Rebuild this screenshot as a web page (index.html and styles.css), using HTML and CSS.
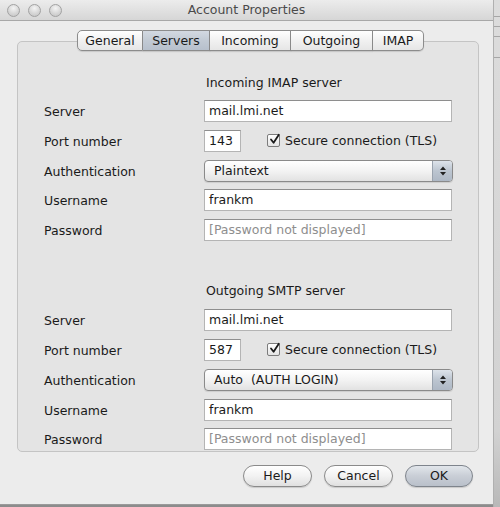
FILE: index.html
```html
<!DOCTYPE html>
<html>
<head>
<meta charset="utf-8">
<link rel="stylesheet" href="styles.css">
</head>
<body>
<div class="screen">
  <div class="window">
    <div class="titlebar">
      <div class="lights"><span class="light"></span><span class="light"></span><span class="light"></span></div>
      <div class="title">Account Properties</div>
    </div>
    <div class="tabs">
      <div class="tab t-general">General</div>
      <div class="tab t-servers selected">Servers</div>
      <div class="tab t-incoming">Incoming</div>
      <div class="tab t-outgoing">Outgoing</div>
      <div class="tab t-imap">IMAP</div>
    </div>
    <div class="tabbox">
      <div class="section first">
        <div class="heading">Incoming IMAP server</div>
        <div class="grid">
          <div class="label">Server</div>
          <div class="field"><div class="input wide">mail.lmi.net</div></div>
          <div class="label">Port number</div>
          <div class="field port-row"><div class="input port">143</div><div class="check"><span class="box"><svg width="13" height="13" viewBox="0 0 13 13"><path d="M3 6.5 L5.6 9.8 L10.8 1.8" fill="none" stroke="#1a1a1a" stroke-width="1.8" stroke-linecap="round" stroke-linejoin="round"/></svg></span><span class="check-label">Secure connection (TLS)</span></div></div>
          <div class="label">Authentication</div>
          <div class="field"><div class="popup"><span class="popup-text">Plaintext</span><span class="stepper"><svg width="8" height="12" viewBox="0 0 8 12"><path d="M4 1.5 L7 5 L1 5 Z M4 10.5 L7 7 L1 7 Z" fill="#222"/></svg></span></div></div>
          <div class="label">Username</div>
          <div class="field"><div class="input wide">frankm</div></div>
          <div class="label">Password</div>
          <div class="field"><div class="input wide placeholder">[Password not displayed]</div></div>
        </div>
      </div>
      <div class="section second">
        <div class="heading">Outgoing SMTP server</div>
        <div class="grid">
          <div class="label">Server</div>
          <div class="field"><div class="input wide">mail.lmi.net</div></div>
          <div class="label">Port number</div>
          <div class="field port-row"><div class="input port">587</div><div class="check"><span class="box"><svg width="13" height="13" viewBox="0 0 13 13"><path d="M3 6.5 L5.6 9.8 L10.8 1.8" fill="none" stroke="#1a1a1a" stroke-width="1.8" stroke-linecap="round" stroke-linejoin="round"/></svg></span><span class="check-label">Secure connection (TLS)</span></div></div>
          <div class="label">Authentication</div>
          <div class="field"><div class="popup"><span class="popup-text">Auto&nbsp; (AUTH LOGIN)</span><span class="stepper"><svg width="8" height="12" viewBox="0 0 8 12"><path d="M4 1.5 L7 5 L1 5 Z M4 10.5 L7 7 L1 7 Z" fill="#222"/></svg></span></div></div>
          <div class="label">Username</div>
          <div class="field"><div class="input wide">frankm</div></div>
          <div class="label">Password</div>
          <div class="field"><div class="input wide placeholder">[Password not displayed]</div></div>
        </div>
      </div>
    </div>
    <div class="buttons">
      <div class="btn">Help</div>
      <div class="btn">Cancel</div>
      <div class="btn default">OK</div>
    </div>
  </div>
  <div class="behind">
    <div class="bl l1"></div>
    <div class="bl l2"></div>
    <div class="bl l3"></div>
    <div class="bl l4"></div>
  </div>
</div>
</body>
</html>
```

FILE: styles.css
```css
* { box-sizing: border-box; }
html, body { margin: 0; padding: 0; }
body {
  width: 500px;
  height: 507px;
  overflow: hidden;
  background: #8c8c8c;
  font-family: "DejaVu Sans", "Verdana", sans-serif;
  font-size: 12.5px;
  color: #1a1a1a;
}
.screen {
  display: flex;
  width: 500px;
  height: 507px;
}
.window {
  width: 493px;
  height: 505px;
  background: #ececec;
  border-bottom: 1px solid #9a9a9a;
  flex: none;
}
.behind {
  flex: 1;
  height: 507px;
  background: linear-gradient(#dcdcdc, #d2d2d2 85%, #b8b8b8);
  border-left: 1px solid #b0b0b0;
  padding-top: 16px;
}
.bl { height: 1px; background: #a6a6a6; }
.l1 { margin-top: 0; }
.l2 { margin-top: 9px; }
.l3 { margin-top: 9px; }
.l4 { margin-top: 20px; }

.titlebar {
  height: 21px;
  background: linear-gradient(#ececec, #d6d6d6);
  border-bottom: 1px solid #a8a8a8;
  display: flex;
  align-items: center;
  position: relative;
}
.lights {
  display: flex;
  gap: 8px;
  padding-left: 7px;
}
.light {
  width: 13px;
  height: 13px;
  border-radius: 50%;
  background: radial-gradient(circle at 50% 30%, #f4f4f4, #d4d4d4 60%, #c2c2c2);
  border: 1px solid #a2a2a2;
}
.title {
  position: absolute;
  left: 0;
  right: 0;
  top: 2px;
  text-align: center;
  color: #4a4a4a;
  font-size: 12.5px;
  line-height: 16px;
}

.tabs {
  display: flex;
  margin: 9px 0 0 77px;
  height: 21px;
  position: relative;
  z-index: 1;
}
.tab {
  height: 21px;
  line-height: 19px;
  text-align: center;
  border: 1px solid #8c8c8c;
  border-left: none;
  background: linear-gradient(#ffffff, #f1f1f1 50%, #e6e6e6);
  color: #1a1a1a;
  box-shadow: 0 1px 1px rgba(0,0,0,0.12);
}
.t-general { width: 66px; border-left: 1px solid #8c8c8c; border-radius: 5px 0 0 5px; }
.t-servers { width: 67px; }
.t-incoming { width: 81px; }
.t-outgoing { width: 82px; }
.t-imap { width: 51px; border-radius: 0 5px 5px 0; }
.tab.selected {
  background: linear-gradient(#d3d9e1, #c2cad4 50%, #b7c0cc);
}

.tabbox {
  margin: -10px 0 0 17px;
  width: 462px;
  height: 411px;
  background: #e4e4e4;
  border: 1px solid #c4c4c4;
  border-radius: 5px;
  padding: 33px 0 0 26px;
  overflow: hidden;
}
.heading {
  margin-left: 162px;
  line-height: 16px;
  height: 16px;
}
.first .heading { margin-bottom: 9px; }
.second { margin-top: 42px; }
.second .heading { margin-bottom: 10px; }
.grid {
  display: grid;
  grid-template-columns: 160px 249px;
  grid-auto-rows: 22px;
  row-gap: 7.8px;
}
.label {
  line-height: 23px;
}
.field { display: flex; align-items: center; }
.input {
  height: 22px;
  background: #ffffff;
  border: 1px solid #b4b4b4;
  border-top-color: #8e8e8e;
  line-height: 20px;
  padding-left: 4px;
  white-space: nowrap;
  overflow: hidden;
}
.input.wide { width: 248px; }
.input.port { width: 37px; }
.placeholder { color: #8e8e8e; }
.port-row { gap: 26px; }
.check { display: flex; align-items: center; gap: 5px; }
.box {
  width: 13px;
  height: 13px;
  border: 1px solid #7c7c7c;
  border-radius: 2px;
  background: linear-gradient(#ffffff, #e4e4e4);
  display: flex;
  align-items: center;
  justify-content: center;
  overflow: visible;
}
.box svg { margin-top: -2px; margin-left: 1px; flex: none; }
.popup {
  width: 249px;
  height: 22px;
  border: 1px solid #8a8a8a;
  border-radius: 4px;
  background: linear-gradient(#ffffff, #f3f3f3 50%, #e2e2e2);
  display: flex;
  align-items: center;
  justify-content: space-between;
  overflow: hidden;
  box-shadow: 0 1px 1px rgba(0,0,0,0.1);
}
.popup-text { padding-left: 9px; line-height: 20px; }
.stepper {
  width: 20px;
  height: 20px;
  border-left: 1px solid #9aa3ae;
  background: linear-gradient(#dde3ea, #bcc5d0 50%, #aeb8c5);
  display: flex;
  align-items: center;
  justify-content: center;
}

.buttons {
  display: flex;
  justify-content: flex-end;
  gap: 12px;
  margin: 13px 20px 0 0;
}
.btn {
  width: 69px;
  height: 22px;
  border: 1px solid #8a8a8a;
  border-radius: 11px;
  background: linear-gradient(#ffffff, #f2f2f2 50%, #e0e0e0);
  text-align: center;
  line-height: 20px;
  box-shadow: 0 1px 1px rgba(0,0,0,0.15);
}
.btn.default {
  width: 68px;
  background: linear-gradient(#e2e6eb, #c9ced6 50%, #b9c0ca);
  border-color: #7e848c;
}
```
